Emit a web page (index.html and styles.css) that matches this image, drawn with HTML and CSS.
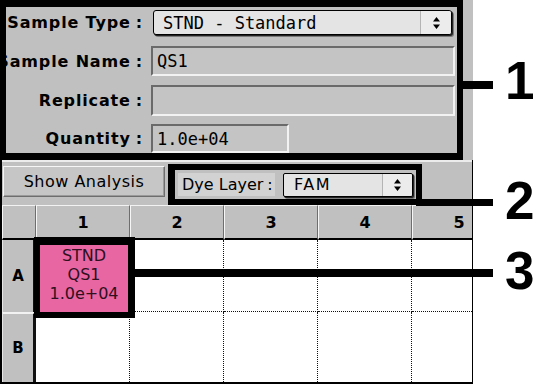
FILE: index.html
```html
<!DOCTYPE html>
<html>
<head>
<meta charset="utf-8">
<link rel="stylesheet" href="styles.css">
</head>
<body>
<div class="stage">
  <div class="window">
    <div class="top">
      <div class="info">
        <div class="row r1">
          <div class="lbl"><span>Sample Type</span><span class="colon">:</span></div>
          <div class="popup big">
            <span class="ptext mono">STND - Standard</span>
            <span class="parrow"><svg width="9" height="14" viewBox="0 0 9 14"><path d="M4.5 1L8 5.5H1Z M1 8.5H8L4.5 13Z" fill="#000"/></svg></span>
          </div>
        </div>
        <div class="row r2">
          <div class="lbl"><span>Sample Name</span><span class="colon">:</span></div>
          <div class="field wide mono">QS1</div>
        </div>
        <div class="row r3">
          <div class="lbl"><span>Replicate</span><span class="colon">:</span></div>
          <div class="field wide"></div>
        </div>
        <div class="row r4">
          <div class="lbl"><span>Quantity</span><span class="colon">:</span></div>
          <div class="field short mono">1.0e+04</div>
        </div>
      </div>
    </div>
    <div class="lower">
      <div class="toolbar">
        <div class="btn">Show Analysis</div>
        <div class="dye">
          <div class="dyelabel">Dye Layer<span class="colon2">:</span></div>
          <div class="popup small">
            <span class="ptext fam">FAM</span>
            <span class="parrow"><svg width="9" height="14" viewBox="0 0 9 14"><path d="M4.5 1L8 5.5H1Z M1 8.5H8L4.5 13Z" fill="#000"/></svg></span>
          </div>
        </div>
      </div>
      <div class="plate">
        <div class="corner"></div>
        <div class="ch">1</div>
        <div class="ch">2</div>
        <div class="ch">3</div>
        <div class="ch">4</div>
        <div class="ch">5</div>

        <div class="rh">A</div>
        <div class="cell rowa a1"><div class="sample">STND<br>QS1<br>1.0e+04</div></div>
        <div class="cell rowa"></div>
        <div class="cell rowa"></div>
        <div class="cell rowa"></div>
        <div class="cell rowa"></div>

        <div class="rh rhb">B</div>
        <div class="cell"></div>
        <div class="cell"></div>
        <div class="cell"></div>
        <div class="cell"></div>
        <div class="cell"></div>
      </div>
    </div>
  </div>

  <div class="callline l1"></div>
  <div class="callline l2"></div>
  <div class="callline l3"></div>
  <div class="num n1">1</div>
  <div class="num n2">2</div>
  <div class="num n3">3</div>
</div>
</body>
</html>
```

FILE: styles.css
```css
* { box-sizing: border-box; margin: 0; padding: 0; }
html, body { width: 536px; height: 385px; overflow: hidden; background: #fff; }
body { font-family: "DejaVu Sans", sans-serif; color: #000; }

.stage { position: relative; width: 536px; height: 385px; }

.window {
  width: 473px;
  height: 384px;
  background: #c0c0c0;
  display: flex;
  flex-direction: column;
}

.top { height: 160px; display: flex; flex: none; }

.info {
  width: 463px;
  height: 160px;
  border: solid #000;
  border-width: 7px 6px;
  display: flex;
  flex-direction: column;
  overflow: hidden;
}

.row { display: flex; align-items: center; flex: none; }
.r1 { margin-top: 3px; height: 25px; }
.r2 { margin-top: 11px; height: 30px; }
.r3 { margin-top: 9px; height: 31px; }
.r4 { margin-top: 8px; height: 29px; }

.lbl {
  width: 145px;
  flex: none;
  display: flex;
  justify-content: flex-end;
  padding-right: 8px;
  font-weight: bold;
  font-size: 16px;
  letter-spacing: 0.85px;
  white-space: nowrap;
}
.lbl span { flex: none; }
.colon { margin-left: 5px; }

.mono { font-family: "DejaVu Sans Mono", monospace; font-size: 17px; }

.field {
  height: 100%;
  border: 2px solid;
  border-color: #6a6a6a #f2f2f2 #f2f2f2 #6a6a6a;
  background: #c4c4c4;
  padding-left: 4px;
  display: flex;
  align-items: center;
}
.field.wide { width: 304px; }
.field.short { width: 138px; }

.popup {
  display: flex;
  align-items: stretch;
  border: 1px solid #000;
  border-radius: 3px;
  background: #e4e4e4;
  box-shadow: 1px 1px 0 #222, 2px 2px 0 #7a7a7a;
}
.popup.big { margin-left: 2px; width: 299px; height: 25px; }
.ptext { display: flex; align-items: center; padding-left: 9px; flex: 1; }
.parrow {
  width: 31px;
  flex: none;
  display: flex;
  align-items: center;
  justify-content: center;
  background: #ececec;
  border-left: 1px solid #b4b4b4;
  border-radius: 0 2px 2px 0;
}

.lower {
  width: 473px;
  flex: 1;
  border-left: 2px solid #000;
  border-right: 1px solid #000;
  border-bottom: 2px solid #000;
  display: flex;
  flex-direction: column;
}

.toolbar {
  height: 45px;
  flex: none;
  border-top: 2px solid #ececec;
  display: flex;
  align-items: flex-start;
}

.btn {
  margin-top: 4px;
  margin-left: 1px;
  width: 162px;
  height: 31px;
  background: #c6c6c6;
  border: 1px solid;
  border-color: #f6f6f6 #6e6e6e #6e6e6e #f6f6f6;
  box-shadow: inset -1px -1px 0 #9a9a9a;
  font-size: 16px;
  letter-spacing: 0.5px;
  display: flex;
  align-items: center;
  justify-content: center;
}

.dye {
  margin-top: 2px;
  margin-left: 3px;
  width: 254px;
  height: 41px;
  border: 6px solid #000;
  border-left-width: 7px;
  display: flex;
  align-items: center;
}
.dyelabel {
  margin-left: 3px;
  width: 97px;
  height: 23px;
  background: #d2d2d2;
  padding-left: 4px;
  font-size: 16px;
  display: flex;
  align-items: center;
  white-space: nowrap;
}
.colon2 { margin-left: 4px; }
.popup.small { margin-left: 8px; width: 130px; height: 24px; border-radius: 2px; }
.popup.small .ptext { padding-left: 10px; }
.popup.small .parrow { width: 30px; }
.fam { font-size: 16px; letter-spacing: 1.5px; }

.plate {
  flex: 1;
  display: grid;
  grid-template-columns: 34px 94px 94px 94px 94px 94px;
  grid-template-rows: 35px 72px 1fr;
  overflow: hidden;
  background: #fff;
}

.corner, .ch {
  background: #c0c0c0;
  border-top: 1px solid #f2f2f2;
  border-left: 1px solid #f6f6f6;
  border-right: 1px solid #6e6e6e;
  border-bottom: 2px solid #000;
}
.ch {
  font-weight: bold;
  font-size: 16px;
  display: flex;
  align-items: center;
  justify-content: center;
}

.rh {
  background: #c0c0c0;
  border-right: 3px solid #111;
  border-left: 1px solid #e6e6e6;
  font-weight: bold;
  font-size: 15px;
  display: flex;
  align-items: center;
  justify-content: center;
}
.rhb { border-top: 2px solid #f2f2f2; }

.cell {
  background: #fff;
  border-right: 1px dotted #111;
}
.cell.rowa { border-bottom: 1px dotted #111; }
.a1 { position: relative; border-right: none; }

.sample {
  position: absolute;
  left: -2px;
  top: -3px;
  width: 101px;
  height: 81px;
  border: solid #000;
  border-width: 8px 7px 6px 6px;
  background: #e866a2;
  color: #2e1020;
  font-size: 16px;
  line-height: 19px;
  text-align: center;
  padding-top: 1px;
  z-index: 2;
}

.callline { position: absolute; background: #000; }
.l1 { left: 463px; top: 81px; width: 30px; height: 8px; }
.l2 { left: 416px; top: 199px; width: 77px; height: 7px; }
.l3 { left: 135px; top: 269px; width: 358px; height: 8px; }

.num {
  position: absolute;
  left: 505px;
  font-family: "Liberation Sans", Arial, sans-serif;
  font-weight: bold;
  font-size: 53px;
  line-height: 52px;
}
.n1 { top: 55px; }
.n2 { top: 175px; }
.n3 { top: 245px; }
```
